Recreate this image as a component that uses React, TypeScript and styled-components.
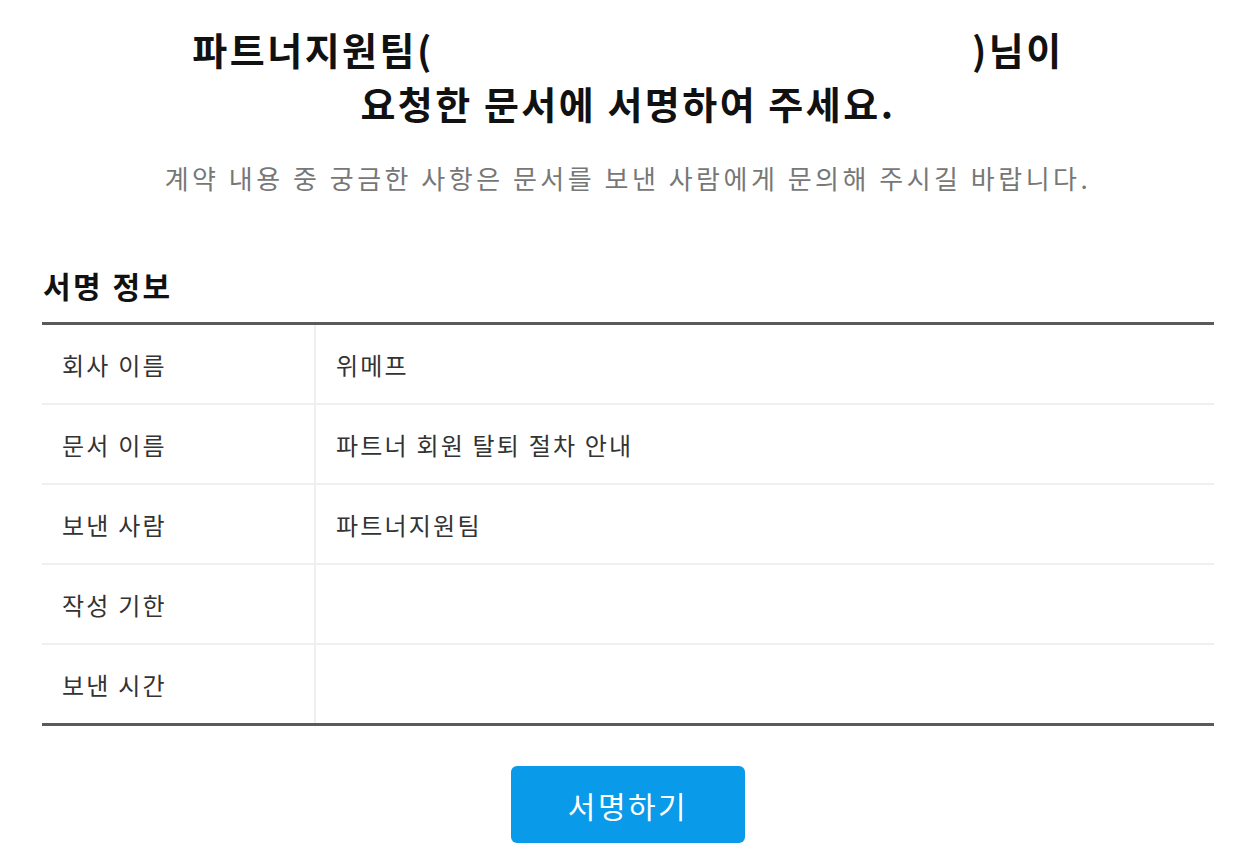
import React from "react";
import styled, { createGlobalStyle } from "styled-components";

const Global = createGlobalStyle`
  html, body { margin: 0; padding: 0; background: #fff; }
  body { font-family: "Noto Sans CJK KR", "Noto Sans", sans-serif; }
`;

const Page = styled.main`
  padding: 22px 33px 0 42px;
  display: flex;
  flex-direction: column;
  align-items: stretch;
`;

const Title = styled.h1`
  margin: 0;
  text-align: center;
  font-size: 38px;
  line-height: 54px;
  font-weight: 700;
  letter-spacing: 2.5px;
  color: #111;
`;

const Blank = styled.span`
  display: inline-block;
  width: 538px;
`;

const Sub = styled.p`
  margin: 31px 0 0;
  text-align: center;
  font-size: 26px;
  line-height: 34px;
  letter-spacing: 3.5px;
  color: #777;
`;

const SectionTitle = styled.h2`
  margin: 70px 0 0 1px;
  font-size: 30px;
  line-height: 40px;
  font-weight: 700;
  letter-spacing: 2.5px;
  color: #111;
`;

const Table = styled.div`
  margin-top: 17px;
  border-top: 3px solid #5a5a5a;
  border-bottom: 3px solid #5a5a5a;
`;

const Row = styled.div<{ $last?: boolean }>`
  display: grid;
  grid-template-columns: 274px 1fr;
  height: ${(p) => (p.$last ? "78px" : "80px")};
  border-bottom: ${(p) => (p.$last ? "none" : "2px solid #efefef")};
  box-sizing: border-box;
`;

const Label = styled.div`
  display: flex;
  align-items: center;
  padding-left: 20px;
  border-right: 2px solid #efefef;
  font-size: 24px;
  letter-spacing: 2.2px;
  color: #333;
`;

const Value = styled.div`
  display: flex;
  align-items: center;
  padding-left: 20px;
  font-size: 24px;
  letter-spacing: 2.2px;
  color: #333;
`;

const Button = styled.button`
  align-self: center;
  margin-top: 40px;
  width: 234px;
  height: 77px;
  border: none;
  border-radius: 6px;
  background: #0a9aea;
  color: #fff;
  font-family: "Noto Sans CJK KR", "Noto Sans", sans-serif;
  font-size: 30px;
  letter-spacing: 2.5px;
  cursor: pointer;
`;

const rows: [string, string][] = [
  ["회사 이름", "위메프"],
  ["문서 이름", "파트너 회원 탈퇴 절차 안내"],
  ["보낸 사람", "파트너지원팀"],
  ["작성 기한", ""],
  ["보낸 시간", ""],
];

export default function App() {
  return (
    <>
      <Global />
      <Page>
        <Title>
          파트너지원팀(<Blank />)님이
          <br />
          요청한 문서에 서명하여 주세요.
        </Title>
        <Sub>계약 내용 중 궁금한 사항은 문서를 보낸 사람에게 문의해 주시길 바랍니다.</Sub>
        <SectionTitle>서명 정보</SectionTitle>
        <Table>
          {rows.map(([k, v], i) => (
            <Row key={k} $last={i === rows.length - 1}>
              <Label>{k}</Label>
              <Value>{v}</Value>
            </Row>
          ))}
        </Table>
        <Button>서명하기</Button>
      </Page>
    </>
  );
}
